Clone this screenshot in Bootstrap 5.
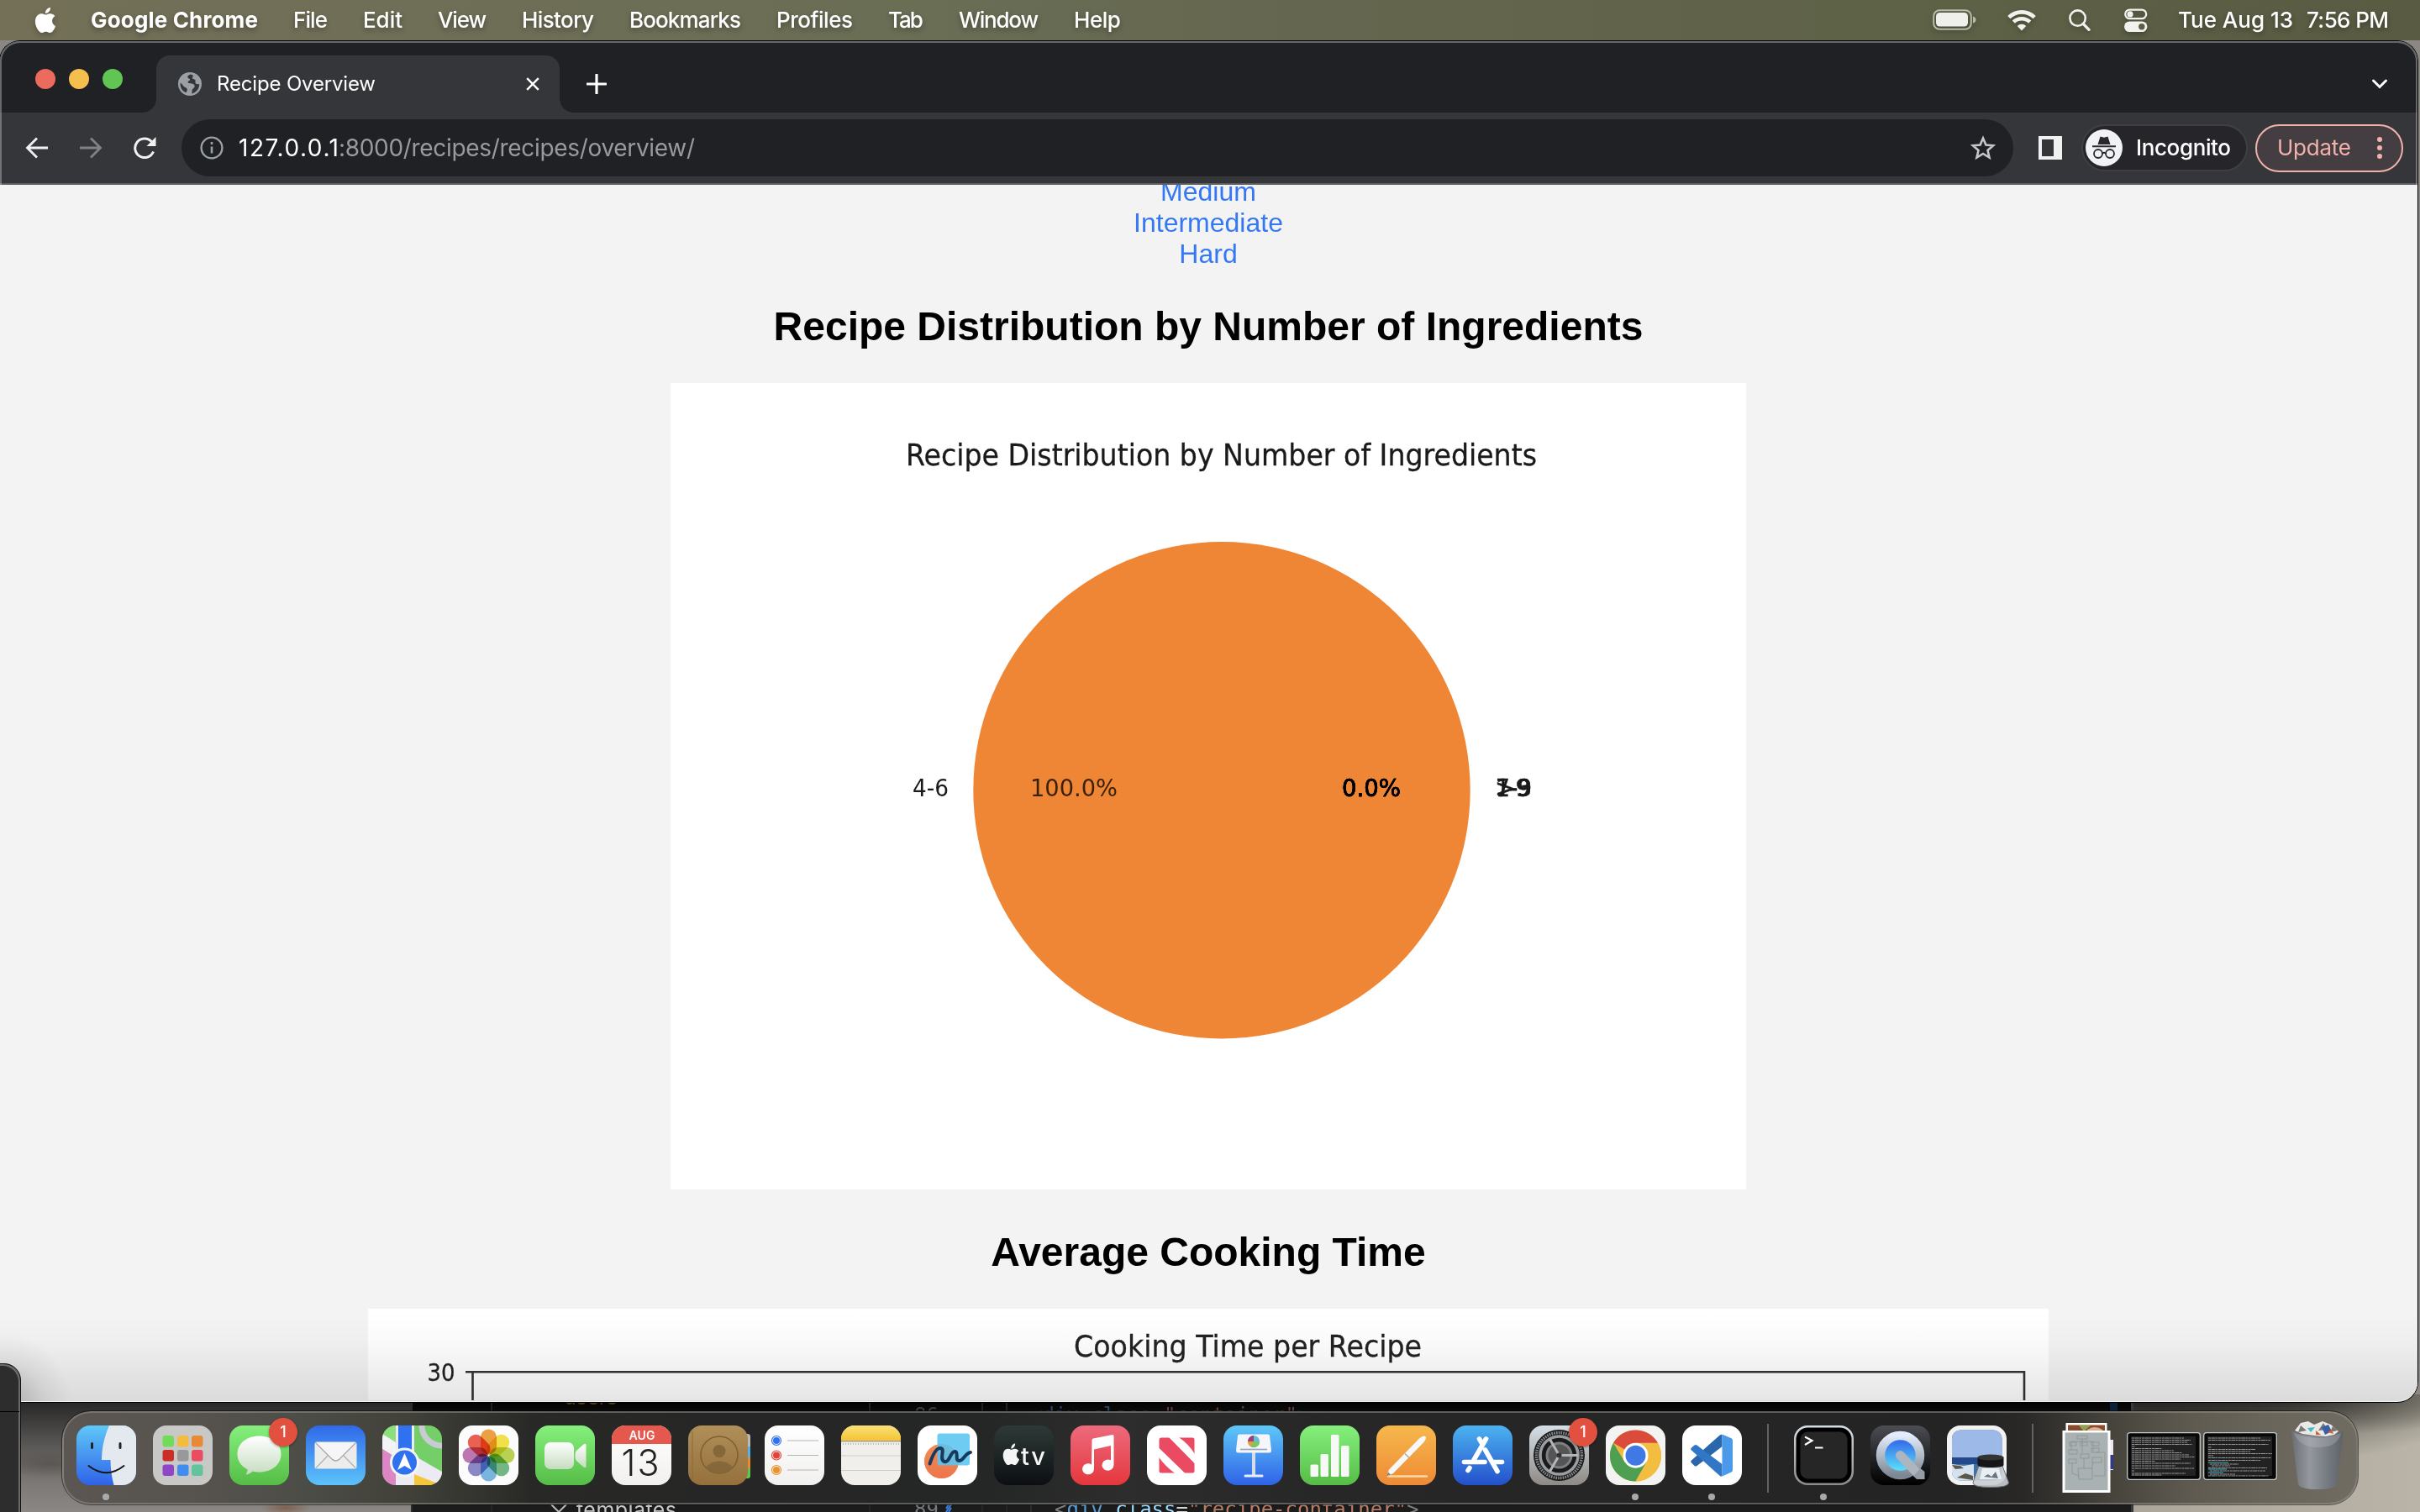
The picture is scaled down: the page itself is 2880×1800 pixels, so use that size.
<!DOCTYPE html>
<html lang="en">
<head>
<meta charset="utf-8">
<title>Recipe Overview</title>
<link href="https://cdn.jsdelivr.net/npm/bootstrap@5.3.0/dist/css/bootstrap.min.css" rel="stylesheet">
<style>
html,body{width:2880px;height:1800px;overflow:hidden;margin:0}
body{font-family:Inter,"Liberation Sans",sans-serif;background:#777;line-height:1}
svg{display:block;flex:none}
.desk{position:relative;width:2880px;height:1800px;overflow:hidden;
 background:linear-gradient(180deg,#8b8783 0,#8b8783 1660px,transparent 1660px),radial-gradient(ellipse 420px 90px at 2540px 1665px,rgba(20,20,18,.85),transparent),radial-gradient(ellipse 320px 50px at 2700px 1660px,rgba(20,20,18,.8),transparent),linear-gradient(90deg,#5b5a59 0,#555 500px,#aaa498 2500px,#b9b4a7 2880px)}
.desk-left{position:absolute;left:0;top:1668px;width:490px;height:132px;background:radial-gradient(ellipse 60px 16px at 60px 75px,rgba(40,38,30,.25),transparent),radial-gradient(ellipse 30px 8px at 340px 127px,#80614e,transparent),linear-gradient(180deg,#262626 0,#545250 35%,#7d7976 75%,#8b8784 100%)}
.menubar{position:absolute;left:0;top:0;width:2880px;height:48px;color:#fff;font-size:26px;font-weight:500;padding:0 37px 1px 41px;background:linear-gradient(90deg,#747058 0,#6f6e57 500px,#6a6e55 1100px,#65664f 1550px,#5e6247 2250px,#595b42 2880px);text-shadow:0 3px 6px rgba(0,0,0,.35);white-space:pre}
.menubar svg{filter:drop-shadow(0 3px 3px rgba(0,0,0,.25))}
.menus{gap:42px;margin-left:41px}
.fit{display:inline-block;white-space:pre}
.wifi{margin-left:37px}.glass{margin-left:39px}.switches{margin-left:40px}.date{margin-left:36px}.clock{margin-left:16px}
.browser{position:absolute;left:0;top:49px;width:2877px;height:1620px;border-radius:24px 24px 24px 20px;overflow:hidden;background:#f3f3f3;box-shadow:0 0 0 1px #000}
.browser-rim{position:absolute;left:0;right:0;top:0;height:171px;border:2px solid rgba(190,190,195,.45);border-bottom:0;pointer-events:none;border-radius:24px 24px 0 0}
.tabstrip{height:85px;background:#202124;padding:17px 35px 0 42px}
.lights{gap:16px;margin-top:-13px}
.lights i{width:24px;height:24px;border-radius:50%}
.tabfoot{width:16px;height:16px;align-self:flex-end}
.foot-l{background:radial-gradient(circle at 0 0,#202124 15.5px,#35363a 16px);margin-left:24px}
.foot-r{background:radial-gradient(circle at 100% 0,#202124 15.5px,#35363a 16px)}
.tabface{width:480px;height:68px;background:#35363a;border-radius:16px 16px 0 0;color:#fff;font-size:24px;padding:0 24px 0 26px}
.tabname{margin-left:18px}
.newtab{margin-left:16px}
.toolbar{height:84px;background:#35363a;padding:0 16px 0 30px}
.omni{width:2180px;height:68px;border-radius:34px;background:#202124;margin-left:30px;padding:0 21px 0 22px;font-size:28px;color:#9a9a9c}
.address{margin-left:18px}
.incog{width:198px;height:56px;border-radius:28px;background:#26252a;border:2px solid #413f44;color:#fff;font-size:26px;font-weight:500;padding:0 18px 0 3px;margin-left:23px}
.upd{width:176px;height:57px;border-radius:29px;background:#443d42;border:2px solid #f0b2ab;color:#f0b2ab;font-size:26px;padding:0 23px 0 24px;margin-left:9px}
.pageview{height:1449px;border-top:2px solid #5c5d60;overflow:hidden;background:#f3f3f3}
.sheet{width:2876px;margin-top:-10px;text-align:center;font-family:"Liberation Sans",Arial,sans-serif;color:#000}
.levels{font-size:32px;line-height:37px}
.levels a{display:block;color:#3478f6;text-decoration:none}
.sheet h2{font-size:48px;font-weight:700;line-height:55px;margin:40px 0}
.sheet h2.second{margin-top:47px}
.plot{display:block;margin:0 auto;background:#fff;font-family:"DejaVu Sans",sans-serif}
.dockshade{position:absolute;left:0;top:1560px;width:2877px;height:108px;border-radius:0 0 24px 0;background:linear-gradient(180deg,transparent,rgba(0,0,0,.02) 35%,rgba(0,0,0,.10));pointer-events:none}
.leftshade{position:absolute;left:0;top:1560px;width:300px;height:108px;background:radial-gradient(ellipse 80px 80px at 5px 108px,rgba(0,0,0,.22),rgba(0,0,0,.06) 60%,transparent)}
.leftwin{position:absolute;left:-40px;top:1623px;width:65px;height:190px;border-radius:0 20px 0 0;background:#2d2d2d;border:1px solid #111;box-shadow:inset -2px 2px 0 #69696b}
.leftwin div{margin:56px 1px 0 0;height:1px;background:#000}
.editor{position:absolute;left:489px;top:1669px;width:2050px;height:131px;background:linear-gradient(180deg,#040404 0,#0a0a0a 11px,#191919 100px,#1c1c1c);border-left:2px solid #2c2c2c;border-right:3px solid #3a3a3c;overflow:hidden}
.dockbar{position:absolute;left:74px;top:1680px;width:2732px;height:111px;border-radius:34px;border:2px solid rgba(150,150,145,.5);outline:1px solid rgba(0,0,0,.5);padding:0 12px 0 14.5px;
 background:linear-gradient(90deg,#5b5652 0,#57534e 150px,#4e4e48 270px,#41413a 410px,#282826 560px,#262626 800px,#252626 1100px,#2c2d2c 1260px,#272727 1500px,#242424 2250px,#292827 2330px,#45423b 2430px,#5e5a50 2530px,#6a655b 2620px,#716c61 2732px)}
.apps{gap:20px;margin-top:-7px}
.app{position:relative;width:71px;height:71px}
.running::after{content:"";position:absolute;left:31.5px;top:81.5px;width:8px;height:8px;border-radius:50%;background:#a9a9a9}
.note{position:absolute;right:-10.5px;top:-9px;width:34px;height:34px;border-radius:50%;background:#e2503f;color:#fff;font-size:18px;font-weight:500;line-height:34px;text-align:center;box-shadow:0 1px 3px rgba(0,0,0,.4)}
.divide{width:2px;height:82px;background:#636363;margin:0 30px 0 30px}
.petals rect{mix-blend-mode:multiply}
.mini{margin-top:-4px}
.mini.m1{margin-left:15px}.mini.m2{margin-left:3px}
.bin{margin:-6px 0 0 16px}
</style>
<script src="https://cdn.jsdelivr.net/npm/bootstrap@5.3.0/dist/js/bootstrap.bundle.min.js"></script>
</head>
<body>
<div class="desk">
 <div class="desk-left"></div>

 <!-- code editor showing behind the dock -->
 <div class="editor">
  <svg width="2045" height="131" font-family="DejaVu Sans Mono, monospace" font-size="24">
   <path d="M94 0V131M544 0V131M678 0V131M707 0V131" stroke="#2b2b2b" stroke-width="1.5"/><path d="M736 118V131" stroke="#333" stroke-width="1.5"/>
   <rect x="2020" y="0" width="9" height="11" fill="#0c2038"/>
   <text x="180" y="3" fill="#4d4016" font-family="Inter, sans-serif" font-size="25" textLength="64">users</text>
   <text x="195" y="137" fill="#c8c8c8" font-family="Inter, sans-serif" font-size="25" textLength="119">templates</text>
   <path d="M165 122l9 9 9-9" fill="none" stroke="#bbb" stroke-width="2"/>
   <text x="597" y="24" fill="#3a3d42">86</text><text x="597" y="136" fill="#777b80">89</text>
   <path d="M635 131l6-9M638 131l3-5M635 127l3-5" stroke="#3b7fe0" stroke-width="2"/>
   <text x="735" y="24" fill="#2c4763" xml:space="preserve">&lt;div class=<tspan fill="#5d4235">"container"</tspan>&gt;</text>
   <text x="764" y="136" fill="#808080" xml:space="preserve">&lt;<tspan fill="#569cd6">div</tspan> <tspan fill="#9cdcfe">class</tspan><tspan fill="#d4d4d4">=</tspan><tspan fill="#b97e67">"recipe-container"</tspan>&gt;</text>
  </svg>
 </div>

 <!-- menu bar -->
 <div class="menubar d-flex align-items-center">
  <svg width="26" height="30" viewBox="1 0 14 16" preserveAspectRatio="none" fill="#fff"><path d="M11.182.008C11.148-.03 9.923.023 8.857 1.18c-1.066 1.156-.902 2.482-.878 2.516s1.52.087 2.475-1.258.762-2.391.728-2.43m3.314 11.733c-.048-.096-2.325-1.234-2.113-3.422s1.675-2.789 1.698-2.854-.597-.79-1.254-1.157a3.7 3.7 0 0 0-1.563-.434c-.108-.003-.483-.095-1.254.116-.508.139-1.653.589-1.968.607-.316.018-1.256-.522-2.267-.665-.647-.125-1.333.131-1.824.328-.49.196-1.422.754-2.074 2.237-.652 1.482-.311 3.83-.067 4.56s.625 1.924 1.273 2.796c.576.984 1.34 1.667 1.659 1.899s1.219.386 1.843.067c.502-.308 1.408-.485 1.766-.472.357.013 1.061.154 1.782.539.571.197 1.111.115 1.652-.105.541-.221 1.324-1.059 2.238-2.758q.52-1.185.473-1.282"/></svg>
  <nav class="menus d-flex align-items-center">
   <b class="fit" data-w="199">Google Chrome</b><span class="fit" data-w="41">File</span><span class="fit" data-w="47">Edit</span><span class="fit" data-w="58">View</span><span class="fit" data-w="86">History</span><span class="fit" data-w="133">Bookmarks</span><span class="fit" data-w="91">Profiles</span><span class="fit" data-w="42">Tab</span><span class="fit" data-w="95">Window</span><span class="fit" data-w="56">Help</span>
  </nav>
  <div class="d-flex align-items-center ms-auto">
   <svg width="52" height="26" viewBox="0 0 52 26"><rect x="1.2" y="1.2" width="44.6" height="22.6" rx="7" fill="none" stroke="#b9baa9" stroke-width="2"/><rect x="4" y="4" width="38" height="16.5" rx="4.5" fill="#efefeb"/><path d="M48 8.5q3.5 1 3.5 4t-3.5 4z" fill="#b9baa9"/></svg>
   <svg class="wifi" width="34" height="26" viewBox="0 0 34 26" fill="none" stroke="#f1f1ed" stroke-width="4.6"><path d="M1.8 9.6a21.6 21.6 0 0 1 30.4 0"/><path d="M7.3 15.2a13.8 13.8 0 0 1 19.4 0"/><path d="M17 25.4l-5.3-5.4a7.6 7.6 0 0 1 10.6 0z" fill="#f1f1ed" stroke="none"/></svg>
   <svg class="glass" width="26" height="26" viewBox="0 0 26 26" fill="none" stroke="#f1f1ed" stroke-width="2.6"><circle cx="10.6" cy="10.6" r="9.2"/><path d="M17.2 17.4l6.8 7" stroke-width="3.4" stroke-linecap="round"/></svg>
   <svg class="switches" width="28" height="28" viewBox="0 0 28 28"><rect x="1.2" y="1.6" width="25" height="10.6" rx="5.3" fill="none" stroke="#f1f1ed" stroke-width="2.2"/><circle cx="7" cy="6.9" r="3.6" fill="#f1f1ed"/><rect x="0" y="15.4" width="27.4" height="12.6" rx="6.3" fill="#f1f1ed"/><circle cx="20.8" cy="21.7" r="3.7" fill="#5b5d44"/></svg>
   <span class="fit date" data-w="137">Tue Aug 13</span><span class="fit clock" data-w="98">7:56 PM</span>
  </div>
 </div>

 <!-- browser window -->
 <div class="browser">
  <div class="tabstrip d-flex align-items-center">
   <div class="lights d-flex"><i style="background:#ed6a5e"></i><i style="background:#f4bf4f"></i><i style="background:#61c554"></i></div>
   <div class="tabfoot foot-l"></div>
   <div class="tabface d-flex align-items-center">
    <svg width="28" height="28" viewBox="0 0 28 28"><circle cx="14" cy="14" r="14" fill="#9aa0a6"/><path d="M14.6 2.4c-2.8 1.3-3.7 2.3-3.2 3.9.5 1.4 2.6.9 2.8 2.5.1 1.3-2.8 1.4-2.6 3.3.2 1.4 2.4 1.2 4.6 1.4 2.7.3 4 2.200 3.300 4.200-.5 1.400-2.300 1.600-2.800 3.500-.4 1.700.2 2.900-.8 4.300 5-.8 9.400-5.500 9.300-11.500-2.500.5-4.200.2-4.700-1.500-.4-1.600.7-2.400-.3-3.600-1-1.100-2.600-.4-3.100-1.700-.5-1.500.9-2.300.7-3.800z" fill="#35363a"/><path d="M2.600 12.500c-.5 5 2 9.600 6.500 11.800 1.400-1.500 2.200-2.800 1.500-4.500-.8-1.700-3.200-1.500-4.300-3.200-.9-1.500-1.600-3-3.700-4.100z" fill="#35363a"/></svg>
    <span class="fit tabname" data-w="189">Recipe Overview</span>
    <svg class="ms-auto" width="16" height="16" viewBox="0 0 16 16"><path d="M1.200 1.200l13.600 13.600M14.800 1.200L1.200 14.800" stroke="#fff" stroke-width="2.400"/></svg>
   </div>
   <div class="tabfoot foot-r"></div>
   <svg class="newtab" width="24" height="24" viewBox="0 0 24 24"><path d="M12 1v22M1 12h22" stroke="#fff" stroke-width="3.200" stroke-linecap="round"/></svg>
   <svg class="ms-auto" width="20" height="14" viewBox="0 0 20 14"><path d="M2.500 3l7.500 7.500L17.500 3" fill="none" stroke="#fff" stroke-width="3" stroke-linecap="round"/></svg>
  </div>
  <div class="toolbar d-flex align-items-center">
   <svg width="27" height="26" viewBox="0 0 27 26" fill="none" stroke="#f1f1f2" stroke-width="2.800"><path d="M27 13H3M14 1.500L2.500 13 14 24.500"/></svg>
   <svg style="margin-left:38px" width="27" height="26" viewBox="0 0 27 26" fill="none" stroke="#818286" stroke-width="2.800"><path d="M0 13h24M13 1.500L24.500 13 13 24.500"/></svg>
   <svg style="margin-left:36px" width="28" height="26" viewBox="0 0 28 26"><path d="M24.500 17.500A11.300 11.300 0 1 1 22.300 5.600" fill="none" stroke="#f1f1f2" stroke-width="3"/><path d="M27.500 0v11h-11z" fill="#f1f1f2"/></svg>
   <div class="omni d-flex align-items-center">
    <svg width="28" height="28" viewBox="0 0 28 28"><circle cx="14" cy="14" r="12.400" fill="none" stroke="#9aa0a6" stroke-width="2.400"/><path d="M14 12.500v8M14 7v3" stroke="#9aa0a6" stroke-width="2.600"/></svg>
    <span class="address d-inline-flex"><span class="fit text-white" data-w="119">127.0.0.1</span><span class="fit" data-w="424">:8000/recipes/recipes/overview/</span></span>
    <svg class="ms-auto" width="30" height="30" viewBox="0 0 30 30"><path d="M15 3.500l3.400 8 8.700.8-6.600 5.700 2 8.500-7.500-4.500-7.500 4.500 2-8.500-6.600-5.700 8.700-.8z" fill="none" stroke="#c7c8ca" stroke-width="2.600"/></svg>
   </div>
   <svg style="margin-left:30px" width="28" height="28" viewBox="0 0 28 28"><path fill-rule="evenodd" d="M0 0h28v28H0zM4 4v20h14V4z" fill="#f1f1f2"/></svg>
   <div class="incog d-flex align-items-center">
    <svg width="44" height="44" viewBox="0 0 44 44"><circle cx="22" cy="22" r="22" fill="#f1f2f5"/><path d="M14.500 18l3-9.500 4.500 1.200 4.500-1.200 3 9.500z" fill="#2a2a2e"/><path d="M8 20.300h28" stroke="#2a2a2e" stroke-width="2"/><g fill="none" stroke="#2a2a2e" stroke-width="1.800"><circle cx="15" cy="29" r="5"/><circle cx="29" cy="29" r="5"/><path d="M20 28.500q2-1.500 4 0"/></g></svg>
    <span class="fit" data-w="113" style="margin-left:16px">Incognito</span>
   </div>
   <div class="upd d-flex align-items-center">
    <span class="fit" data-w="88">Update</span>
    <svg class="ms-auto" width="6" height="28" viewBox="0 0 6 28" fill="#f0b2ab"><circle cx="3" cy="4" r="3"/><circle cx="3" cy="14" r="3"/><circle cx="3" cy="24" r="3"/></svg>
   </div>
  </div>
  <div class="pageview">
   <div class="sheet">
    <div class="levels"><a href="#">Medium</a><a href="#">Intermediate</a><a href="#">Hard</a></div>
    <h2>Recipe Distribution by Number of Ingredients</h2>
    <svg class="plot" width="1280" height="960" font-size="27.800" fill="#1a1a1a">
     <text x="280" y="97.500" font-size="35.500" textLength="751" lengthAdjust="spacingAndGlyphs" stroke="#1a1a1a" stroke-width=".3">Recipe Distribution by Number of Ingredients</text>
     <circle cx="656" cy="484.800" r="295.700" fill="#ee8635"/>
     <text x="288" y="492" textLength="43" lengthAdjust="spacingAndGlyphs">4-6</text>
     <text x="428" y="492" textLength="104" lengthAdjust="spacingAndGlyphs" fill="#3a2109">100.0%</text>
     <g fill="#000" stroke="#000" stroke-width=".4"><text x="799" y="492" textLength="70" lengthAdjust="spacingAndGlyphs">0.0%</text><text x="799" y="492" textLength="70" lengthAdjust="spacingAndGlyphs">0.0%</text><text x="799" y="492" textLength="70" lengthAdjust="spacingAndGlyphs">0.0%</text></g>
     <g stroke="#1a1a1a" stroke-width=".5"><text x="982" y="492" textLength="43" lengthAdjust="spacingAndGlyphs">1-3</text><text x="982" y="492" textLength="43" lengthAdjust="spacingAndGlyphs">7-9</text><text x="981" y="492" textLength="43" lengthAdjust="spacingAndGlyphs">&gt;9</text></g>
    </svg>
    <h2 class="second">Average Cooking Time</h2>
    <svg class="plot" width="2000" height="600" fill="#222">
     <text x="840" y="57" font-size="35.500" textLength="414" lengthAdjust="spacingAndGlyphs" stroke="#222" stroke-width=".3">Cooking Time per Recipe</text>
     <text x="70.500" y="85.500" font-size="27.800" textLength="33" lengthAdjust="spacingAndGlyphs" stroke="#222" stroke-width=".3">30</text>
     <path d="M116 75.200H1970.500M124.500 75.200V600M1971 74V600" stroke="#333" stroke-width="2.600" fill="none"/>
    </svg>
   </div>
  </div>
  <div class="browser-rim"></div>
 </div>
 <div class="dockshade"></div>
 <div class="leftshade"></div>
 <div class="leftwin"><div></div></div>

 <!-- dock -->
 <svg width="0" height="0" class="position-absolute"><defs>
  <linearGradient id="gBlue" x2="0" y2="1"><stop stop-color="#5fc8f8"/><stop offset="1" stop-color="#2f62e8"/></linearGradient>
  <linearGradient id="gMail" x2="0" y2="1"><stop stop-color="#3069e8"/><stop offset="1" stop-color="#5cc3fa"/></linearGradient>
  <linearGradient id="gGreen" x2="0" y2="1"><stop stop-color="#86f07d"/><stop offset="1" stop-color="#55bd46"/></linearGradient>
  <linearGradient id="gWhite" x2="0" y2="1"><stop stop-color="#fff"/><stop offset="1" stop-color="#f1f0ee"/></linearGradient>
  <linearGradient id="gSil" x2="0" y2="1"><stop stop-color="#fff"/><stop offset="1" stop-color="#c6dcc0"/></linearGradient>
  <linearGradient id="gYel" x2="0" y2="1"><stop stop-color="#fbe07a"/><stop offset="1" stop-color="#f5c430"/></linearGradient>
  <linearGradient id="gTv" x2="0" y2="1"><stop stop-color="#2e3a37"/><stop offset="1" stop-color="#0c0f12"/></linearGradient>
  <linearGradient id="gRed" x2="0" y2="1"><stop stop-color="#ec6b7d"/><stop offset="1" stop-color="#e5373d"/></linearGradient>
  <linearGradient id="gOr" x2="0" y2="1"><stop stop-color="#f6b84c"/><stop offset="1" stop-color="#ee8a36"/></linearGradient>
  <linearGradient id="gSt" x2="0" y2="1"><stop stop-color="#4cb3f0"/><stop offset="1" stop-color="#2450cc"/></linearGradient>
  <linearGradient id="gGrey" x2="0" y2="1"><stop stop-color="#d5dfe6"/><stop offset="1" stop-color="#8e8a85"/></linearGradient>
  <linearGradient id="gQt" x2="0" y2="1"><stop stop-color="#4c4e54"/><stop offset="1" stop-color="#000"/></linearGradient>
  <linearGradient id="gRing" x2="0" y2="1"><stop stop-color="#e3ecfa"/><stop offset="1" stop-color="#7e8794"/></linearGradient>
  <linearGradient id="gQ" x2="0" y2="1"><stop stop-color="#2c59e8"/><stop offset="1" stop-color="#62f1fb"/></linearGradient>
  <linearGradient id="gTrash"><stop stop-color="#6b6f75"/><stop offset=".35" stop-color="#94989e"/><stop offset=".7" stop-color="#757a81"/><stop offset="1" stop-color="#5d6168"/></linearGradient>
  <linearGradient id="gCont" x2="0" y2="1"><stop stop-color="#b08f59"/><stop offset="1" stop-color="#95703c"/></linearGradient>
  <clipPath id="tile"><rect width="71" height="71" rx="16"/></clipPath>
 </defs></svg>
 <div class="dockbar d-flex align-items-center">
  <div class="apps d-flex">
   <!-- Finder -->
   <div class="app running"><svg width="71" height="71"><g clip-path="url(#tile)"><rect width="71" height="71" fill="url(#gBlue)"/><path d="M39 0C33 14 30 27 30 41h10.500c0 11 1.500 21 4 30H71V0z" fill="#e4e8ef"/></g><path d="M18.500 21.500v5M52 21.500v5" stroke="#222" stroke-width="3" stroke-linecap="round"/><path d="M14.500 48q21 16.500 42 0" fill="none" stroke="#151515" stroke-width="2" stroke-linecap="round"/></svg></div>
   <!-- Launchpad -->
   <div class="app"><svg width="71" height="71"><rect width="71" height="71" rx="16" fill="#c8c8c7"/><g><rect x="11.500" y="12" width="13.500" height="13.500" rx="3" fill="#70dc58"/><rect x="29" y="12" width="13.500" height="13.500" rx="3" fill="#f4bb3d"/><rect x="46" y="12" width="13.500" height="13.500" rx="3" fill="#e88a35"/><rect x="11.500" y="29" width="13.500" height="13.500" rx="3" fill="#c92f28"/><rect x="29" y="29" width="13.500" height="13.500" rx="3" fill="#97999b"/><rect x="46" y="29" width="13.500" height="13.500" rx="3" fill="#ec4c62"/><rect x="11.500" y="46.500" width="13.500" height="13.500" rx="3" fill="#9045c9"/><rect x="29" y="46.500" width="13.500" height="13.500" rx="3" fill="#3f8df0"/><rect x="46" y="46.500" width="13.500" height="13.500" rx="3" fill="#62c49c"/></g></svg></div>
   <!-- Messages -->
   <div class="app"><svg width="71" height="71"><rect width="71" height="71" rx="16" fill="url(#gGreen)"/><path d="M35.500 12.500c15 0 26 9 26 21.500S50.500 55.500 35.500 55.500c-3 0-5.500-.3-8-1-1.500 1.800-4.500 3.800-8 4 1.500-2 2-3.800 2-6.200C14 48.500 9.500 42 9.500 34c0-12.500 11-21.500 26-21.500z" fill="url(#gSil)"/></svg><span class="note">1</span></div>
   <!-- Mail -->
   <div class="app"><svg width="71" height="71"><rect width="71" height="71" rx="16" fill="url(#gMail)"/><rect x="10.500" y="19.500" width="50" height="32" rx="2.500" fill="#ececec"/><path d="M12 50.500l14-14.500M59 50.500L45 36" stroke="#b0b0b0" stroke-width="1.200"/><path d="M11.500 20.500L31 40q4.500 4 9 0L59.500 20.500" fill="#f6f6f6" stroke="#a6a6a6" stroke-width="1.200"/></svg></div>
   <!-- Maps -->
   <div class="app"><svg width="71" height="71"><g clip-path="url(#tile)"><rect width="71" height="71" fill="#74cf69"/><path d="M0 10L16 20V0H0z" fill="#8be07d"/><path d="M0 10L16 20V38L0 28z" fill="#f3f3f6"/><path d="M0 28L16 38V71H0z" fill="#dd86c6"/><rect x="16" width="22" height="71" fill="#ecebf3"/><rect x="19" width="16" height="50" fill="#2f71ee"/><path d="M38 48L71 68v3H38z" fill="#f3c63c"/><path d="M38 36L71 55V71L38 58z" fill="#ecebf3"/><circle cx="71" cy="0" r="24" fill="none" stroke="#c9cbd4" stroke-width="7"/><circle cx="26.500" cy="44" r="17.500" fill="#f5f5f7"/><circle cx="26.500" cy="44" r="14.500" fill="#2f71ee"/><path d="M26.500 33l8.500 20-8.500-5-8.500 5z" fill="#fff"/></g></svg></div>
   <!-- Photos -->
   <div class="app"><svg width="71" height="71"><rect width="71" height="71" rx="16" fill="#fcfcfc"/><g class="petals" transform="translate(35.500 35.500)" fill-opacity=".92"><rect x="-9.500" y="-31" width="19" height="30" rx="9.500" fill="#ee9a35"/><rect x="-9.500" y="-31" width="19" height="30" rx="9.500" fill="#f2e13c" transform="rotate(45)"/><rect x="-9.500" y="-31" width="19" height="30" rx="9.500" fill="#b4d048" transform="rotate(90)"/><rect x="-9.500" y="-31" width="19" height="30" rx="9.500" fill="#68b47c" transform="rotate(135)"/><rect x="-9.500" y="-31" width="19" height="30" rx="9.500" fill="#6fb2e0" transform="rotate(180)"/><rect x="-9.500" y="-31" width="19" height="30" rx="9.500" fill="#8280c4" transform="rotate(225)"/><rect x="-9.500" y="-31" width="19" height="30" rx="9.500" fill="#bb6cab" transform="rotate(270)"/><rect x="-9.500" y="-31" width="19" height="30" rx="9.500" fill="#e95545" transform="rotate(315)"/></g></svg></div>
   <!-- FaceTime -->
   <div class="app"><svg width="71" height="71"><rect width="71" height="71" rx="16" fill="url(#gGreen)"/><rect x="11" y="20" width="35" height="32" rx="7" fill="url(#gSil)"/><path d="M47.500 34q0-3 2-4.500l8-7q3-2 3 1v25q0 3-3 1l-8-7q-2-1.500-2-4z" fill="url(#gSil)"/></svg></div>
   <!-- Calendar -->
   <div class="app"><svg width="71" height="71"><rect width="71" height="71" rx="16" fill="url(#gWhite)"/><path d="M0 22V16A16 16 0 0 1 16 0H55A16 16 0 0 1 71 16V22z" fill="#e4584d"/><text x="20.500" y="16.500" font-family="Inter" font-size="14" font-weight="600" fill="#fff" textLength="31">AUG</text><text x="11.500" y="60" font-family="Inter" font-size="43" font-weight="300" fill="#222" textLength="45">13</text></svg></div>
   <!-- Contacts -->
   <div class="app"><svg width="76" height="71"><rect x="66" y="10" width="8" height="18" rx="3" fill="#b9b9b7"/><rect x="66" y="25" width="8" height="14" fill="#57b1e8"/><rect x="66" y="38" width="8" height="14" fill="#ea8a2e"/><rect x="66" y="50" width="8" height="13" rx="3" fill="#61c554"/><rect width="71" height="71" rx="16" fill="url(#gCont)"/><path d="M5 7v57" stroke="#8a6a38" stroke-width="1"/><circle cx="37" cy="35" r="22" fill="none" stroke="#7f6031" stroke-width="1.600"/><circle cx="37" cy="30.500" r="7.500" fill="#86673a"/><path d="M20.500 49.500q16.500-14 33 0a22 22 0 0 1-33 0z" fill="#86673a"/></svg></div>
   <!-- Reminders -->
   <div class="app"><svg width="71" height="71"><rect width="71" height="71" rx="16" fill="url(#gWhite)"/><path d="M27 18h37M27 35.500h37M27 53h37" stroke="#b3b5b8" stroke-width="1.200"/><g stroke-width="1.200" fill="none"><circle cx="14" cy="18" r="5.500" stroke="#2f71ee"/><circle cx="14" cy="35.500" r="5.500" stroke="#e2443a"/><circle cx="14" cy="53" r="5.500" stroke="#e89230"/></g><circle cx="14" cy="18" r="4" fill="#2f71ee"/><circle cx="14" cy="35.500" r="4" fill="#e2443a"/><circle cx="14" cy="53" r="4" fill="#e89230"/></svg></div>
   <!-- Notes -->
   <div class="app"><svg width="71" height="71"><g clip-path="url(#tile)"><rect width="71" height="71" fill="#f0efec"/><rect width="71" height="18" fill="url(#gYel)"/><path d="M0 18.700h71" stroke="#a5a29b" stroke-width="1.400"/><path d="M2 22h69" stroke="#a9a9a9" stroke-width="1.600" stroke-dasharray="1 2"/><path d="M0 36h71M0 53.500h71" stroke="#cfcecb"/></g></svg></div>
   <!-- Freeform -->
   <div class="app"><svg width="71" height="71"><rect width="71" height="71" rx="16" fill="#fff"/><circle cx="28.500" cy="42.500" r="20.500" fill="url(#gOr)"/><circle cx="28.500" cy="42.500" r="20.500" fill="#ec6060" opacity=".5"/><rect x="23.500" y="9.500" width="38.500" height="38" rx="3" fill="#5ac5f0" fill-opacity=".88"/><path d="M14.500 45.500C17 38 22 26 27.500 27c6 1-2.500 13.500 4.500 16 6 2 7-12.500 12.500-12 5 .5-1 11.500 5.500 11 5-.5 6-8.500 13-10" fill="none" stroke="#183a5c" stroke-width="4" stroke-linecap="round"/></svg></div>
   <!-- TV -->
   <div class="app"><svg width="71" height="71"><rect width="71" height="71" rx="16" fill="url(#gTv)"/><g transform="translate(8.500 21.500) scale(1.480 1.600)"><path fill="#f5f5f5" d="M11.182.008C11.148-.03 9.923.023 8.857 1.18c-1.066 1.156-.902 2.482-.878 2.516s1.520.087 2.475-1.258.762-2.391.728-2.430m3.314 11.733c-.048-.096-2.325-1.234-2.113-3.422s1.675-2.789 1.698-2.854-.597-.79-1.254-1.157a3.700 3.700 0 0 0-1.563-.434c-.108-.003-.483-.095-1.254.116-.508.139-1.653.589-1.968.607-.316.018-1.256-.522-2.267-.665-.647-.125-1.333.131-1.824.328-.49.196-1.422.754-2.074 2.237-.652 1.482-.311 3.830-.067 4.560s.625 1.924 1.273 2.796c.576.984 1.340 1.667 1.659 1.899s1.219.386 1.843.067c.502-.308 1.408-.485 1.766-.472.357.013 1.061.154 1.782.539.571.197 1.111.115 1.652-.105.541-.221 1.324-1.059 2.238-2.758q.52-1.185.473-1.282"/></g><text x="32" y="46.500" font-family="Inter" font-weight="500" font-size="29" fill="#f5f5f5" textLength="29">tv</text></svg></div>
   <!-- Music -->
   <div class="app"><svg width="71" height="71"><rect width="71" height="71" rx="16" fill="url(#gRed)"/><path d="M25.500 17.500q0-1.500 1.500-2L50 11q1.500 0 1.500 1.500V47a7 6.500 0 1 1-3.500-5.500V24L28 28.500V52a7 6.500 0 1 1-3-5.500z" fill="#fff"/></svg></div>
   <!-- News -->
   <div class="app"><svg width="71" height="71"><rect width="71" height="71" rx="16" fill="#fff"/><rect x="14.500" y="14.500" width="42" height="42" rx="2.500" fill="#ea4b62"/><path d="M25.500 13.500h11.500Q50 22 57.500 35v11z" fill="#fff"/><path d="M13.500 26v11Q22 49 34 57.500h12z" fill="#fff"/></svg></div>
   <!-- Keynote -->
   <div class="app"><svg width="71" height="71"><rect width="71" height="71" rx="16" fill="url(#gBlue)"/><rect x="34" y="32" width="4" height="28" fill="#d7dde6"/><rect x="24.500" y="58.500" width="23" height="3" rx="1.500" fill="#e9edf3"/><path d="M19 10.500h34q1.500 0 2 1.500l2 17.500q0 3-2.500 3h-37q-2.500 0-2.500-3L17 12q.5-1.500 2-1.500z" fill="#f4f6f9"/><path d="M20 28.500h32" stroke="#94a6bd" stroke-width="1.600"/><circle cx="36" cy="19" r="7" fill="#65bcd8"/><path d="M36 19V12a7 7 0 0 0-7 7z" fill="#a03f78"/><path d="M36 19h-7a7 7 0 0 0 4 6.300z" fill="#ee9a3b"/><path d="M36 19l-3.500 6.200A7 7 0 0 0 43 20z" fill="#7bc660"/></svg></div>
   <!-- Numbers -->
   <div class="app"><svg width="71" height="71"><rect width="71" height="71" rx="16" fill="url(#gGreen)"/><g fill="#f6f9f5"><rect x="12.500" y="46.500" width="9.500" height="14.500" rx="1.500"/><rect x="24.500" y="34" width="9.500" height="27" rx="1.500"/><rect x="37" y="11" width="9.500" height="50" rx="1.500"/><rect x="49" y="24" width="9.500" height="37" rx="1.500"/></g></svg></div>
   <!-- Pages -->
   <div class="app"><svg width="71" height="71"><rect width="71" height="71" rx="16" fill="url(#gOr)"/><path d="M14 60.500h46" stroke="#f9d9a8" stroke-width="2.400" stroke-linecap="round"/><path d="M12 60.500l3-8L51 15.500q5-4 7.500-2.500 1.500 2.500-2.500 7.500L20 57z" fill="#f8f8f8"/><path d="M34 33.500l5 5" stroke="#aaa" stroke-width="1.500"/><path d="M12 60.500l2-5 3 3z" fill="#8c8272"/></svg></div>
   <!-- App Store -->
   <div class="app"><svg width="71" height="71"><rect width="71" height="71" rx="16" fill="url(#gSt)"/><g stroke="#fff" stroke-width="5.600" stroke-linecap="round" fill="none"><path d="M39.500 16L25 41M31.500 16l3 5M38.500 29L53 54.500M18 53.500l2-3"/><path d="M13.500 43.500H38M49 43.500h9.500"/></g></svg></div>
   <!-- Settings -->
   <div class="app"><svg width="71" height="71"><rect width="71" height="71" rx="16" fill="url(#gGrey)"/><circle cx="35.500" cy="35.500" r="30.500" fill="#1b1b1c"/><circle cx="35.500" cy="35.500" r="27" fill="none" stroke="#85898c" stroke-width="3.500" stroke-dasharray="1.600 1.200"/><circle cx="35.500" cy="35.500" r="22.500" fill="none" stroke="#9b9ea0" stroke-width="3.500"/><circle cx="35.500" cy="35.500" r="14.500" fill="#555" stroke="#7d7f81" stroke-width="3"/><path d="M35.500 35.500H58M35.500 35.500L24.500 16.500M35.500 35.500L24.500 54.500" stroke="#b4b7b9" stroke-width="3"/><circle cx="35.500" cy="35.500" r="3" fill="#333"/></svg><span class="note">1</span></div>
   <!-- Chrome -->
   <div class="app running"><svg width="71" height="71"><rect width="71" height="71" rx="16" fill="#f3f3f2"/><circle cx="35.500" cy="36" r="30.500" fill="#f0b93c"/><path d="M35.500 36L9 20.800A30.500 30.500 0 0 1 62 20.800z" fill="#db4b3c"/><path d="M9 20.800A30.500 30.500 0 0 0 35.500 66.500L48.500 43.500 22.500 43.500z" fill="#4f9f52"/><path d="M35.500 20.800H62A30.500 30.500 0 0 1 35.500 66.500L48.700 43.500z" fill="#f3bd42"/><circle cx="35.500" cy="35.700" r="15" fill="#fff"/><circle cx="35.500" cy="35.700" r="12" fill="#4179e4"/></svg></div>
   <!-- VS Code -->
   <div class="app running"><svg width="71" height="71"><rect width="71" height="71" rx="16" fill="#fff"/><path d="M11 44.500l3.500 3.500q1.500 1 3 0L47.500 25V11q-1.500-.5-3 .7L11 41.500q-1.500 1.500 0 3z" fill="#2a66aa"/><path d="M11 26.500l3.500-3q1.500-1 3 0L47.500 46V60.500q-1.500.3-3-.8L11 29.500q-1.500-1.500 0-3z" fill="#3276c6"/><path d="M47.500 10.500l11 4.800q1.500.8 1.500 2.500V53q0 1.700-1.500 2.500l-11 5z" fill="#4a9ae9"/></svg></div>
  </div>
  <div class="divide"></div>
  <div class="apps d-flex">
   <!-- Terminal -->
   <div class="app running"><svg width="71" height="71"><rect width="71" height="71" rx="16" fill="url(#gGrey)"/><rect x="2.500" y="2.500" width="66" height="66" rx="14" fill="#000"/><rect x="7.500" y="7.500" width="56" height="56" rx="9" fill="#262627"/><path d="M13 13.500l8.500 4.500-8.500 5M25 26.500h9.500" fill="none" stroke="#fff" stroke-width="2.200"/></svg></div>
   <!-- QuickTime -->
   <div class="app"><svg width="71" height="71"><rect width="71" height="71" rx="16" fill="url(#gQt)"/><circle cx="35.500" cy="35.500" r="23.500" fill="url(#gQ)" stroke="url(#gRing)" stroke-width="10.500"/><path d="M35.500 35.500L56 57" stroke="#aeb5bf" stroke-width="11" stroke-linecap="round"/><path d="M51 60l4 4h9.500V55l-5-4z" fill="#949ba5"/></svg></div>
   <!-- Preview -->
   <div class="app"><svg width="76" height="76"><rect width="71" height="71" rx="16" fill="#f2f2f3"/><rect x="6" y="5.500" width="59.500" height="60" rx="10" fill="#3b6fa5"/><path d="M6 38V15.500a10 10 0 0 1 10-10H55.500a10 10 0 0 1 10 10V38z" fill="#9db9e8"/><path d="M6 38h59.500v8H6z" fill="#24498a"/><path d="M6 46l14 2 12-2v19.500H16a10 10 0 0 1-10-10z" fill="#d4e2ee"/><path d="M6 47l10 1 4 3-10 1zM12 62l10-5 9 3v5z" fill="#5d584c"/><path d="M38 48h28l7.500 20q0 5.500-21.500 5.500T31 68z" fill="#c9cdd1" fill-opacity=".9" stroke="#6d7176"/><path d="M42 51h20l3 13H39z" fill="#e9eef2"/><path d="M44 61l5-3 4 3 5-6 3 8z" fill="#6c7480"/><path d="M36.500 38v9q0 3 15.500 3t15.500-3v-9z" fill="#161616"/><ellipse cx="52" cy="38" rx="15.500" ry="3.500" fill="#333"/></svg></div>
  </div>
  <div class="divide"></div>
  <!-- downloads stack -->
  <svg width="66" height="84" viewBox="0 0 66 84"><rect x="0" y="20" width="6" height="36" fill="#333"/><rect x="58" y="20" width="7" height="36" fill="#e8e8ee"/><rect x="58" y="38" width="7" height="17" fill="#2f3a8c"/><rect x="8.500" y="0" width="49" height="20" fill="#fff"/><rect x="11" y="2.500" width="44" height="12" fill="#8a4a2c"/><path d="M24 3l6 7 8-7z" fill="#8aa64e"/><path d="M34 8q9-6 18 0v3H34z" fill="#dfae8f"/><rect x="4.500" y="9" width="57" height="74" fill="#fff"/><rect x="7.500" y="11.500" width="51" height="68.500" fill="#a9b1b2"/><g fill="none" stroke="#8b9293" stroke-width=".8"><rect x="22" y="15" width="12" height="4"/><path d="M28 19v4M15 22h26M15 22v11M28 23v13M41 22v12M45 35h10v28H42M16 48v12l8 3M30 42v12M41 47l-2 8"/><rect x="13" y="23" width="8" height="4"/><rect x="26" y="23" width="8" height="4"/><rect x="39" y="23" width="9" height="4"/><rect x="12" y="32" width="10" height="5"/><rect x="26" y="37" width="10" height="5"/><rect x="39" y="30" width="9" height="5"/><rect x="12" y="43" width="9" height="5"/><rect x="40" y="41" width="11" height="6"/><path d="M23 54h17v13H24z"/></g></svg>
  <!-- minimised terminal windows -->
  <svg class="mini m1" width="88" height="57" viewBox="0 0 88 57"><rect x=".7" y=".7" width="86.600" height="55.600" rx="3" fill="#080808" stroke="#c3c9ce" stroke-width="1.300"/><rect x="5" y="5" width="77" height="47" fill="#222"/><g stroke="#b4b4b4" stroke-width="1.200" stroke-dasharray="3 .6 5 .5 2 .8" opacity=".8"><path d="M6 7h62M6 9.500h70M6 12h66M6 14.500h72M6 17h4M6 19.500h36M6 22h50M6 24.500h60M6 27h68M6 29.500h75M6 32h58M6 34.500h28M6 37h70M6 40h52M6 43h74M6 46h3M6 49h64M6 51h36"/></g></svg>
  <svg class="mini m2" width="88" height="57" viewBox="0 0 88 57"><rect x=".7" y=".7" width="86.600" height="55.600" rx="3" fill="#080808" stroke="#c3c9ce" stroke-width="1.300"/><rect x="5" y="5" width="77" height="47" fill="#222"/><g stroke="#b4b4b4" stroke-width="1.200" stroke-dasharray="3 .6 5 .5 2 .8" opacity=".8"><path d="M6 7h62M6 9.500h74M6 14.500h72M6 18h4M6 20.500h56M6 23h50M6 25.500h76M6 28h6M6 30.500h75M6 33.500h62M8 38h34M10 40h22M6 42.500h70M8 46h66M8 50h30M6 52h72"/></g><path d="M6 36h24M6 44h22M6 48h18" stroke="#3fb3c4" stroke-width="1.100"/></svg>
  <!-- trash -->
  <svg class="bin" width="64" height="84" viewBox="0 0 64 84"><path d="M1 12q31 14 62 0L55 76q-3 6-23 6T9 76z" fill="url(#gTrash)"/><path d="M4 15q28 12 56 0-4 18-30 17Q10 31 4 15z" fill="#c3c6c9" opacity=".3"/><path d="M5 12L12 3l9-2 7 4 10-4 10 4 9 8-5 4-10 2-14-1-14-2z" fill="#e9e9e7"/><path d="M12 6l7 6-10 2zM33 12l6-9 5 8zM50 7l6 5-9 2z" fill="#777"/><path d="M20 9l9-1-5 6z" fill="#43b9c4"/><path d="M37 8l8-3 4 8-8 4z" fill="#3a5fa6"/><path d="M30 12l6 5h-6zM44 14l5-3 2 5z" fill="#d6602f"/></svg>
 </div>
</div>
<script>
/* Tighten or widen tracking so each label fills its data-w width. */
document.querySelectorAll('.fit').forEach(function(e){
 var w=+e.dataset.w,n=e.textContent.length,r=e.getBoundingClientRect().width;
 e.style.letterSpacing=((w-r)/(n-1))+'px';
 e.style.marginRight=(-(w-r)/(n-1))+'px';
});
</script>
</body>
</html>
